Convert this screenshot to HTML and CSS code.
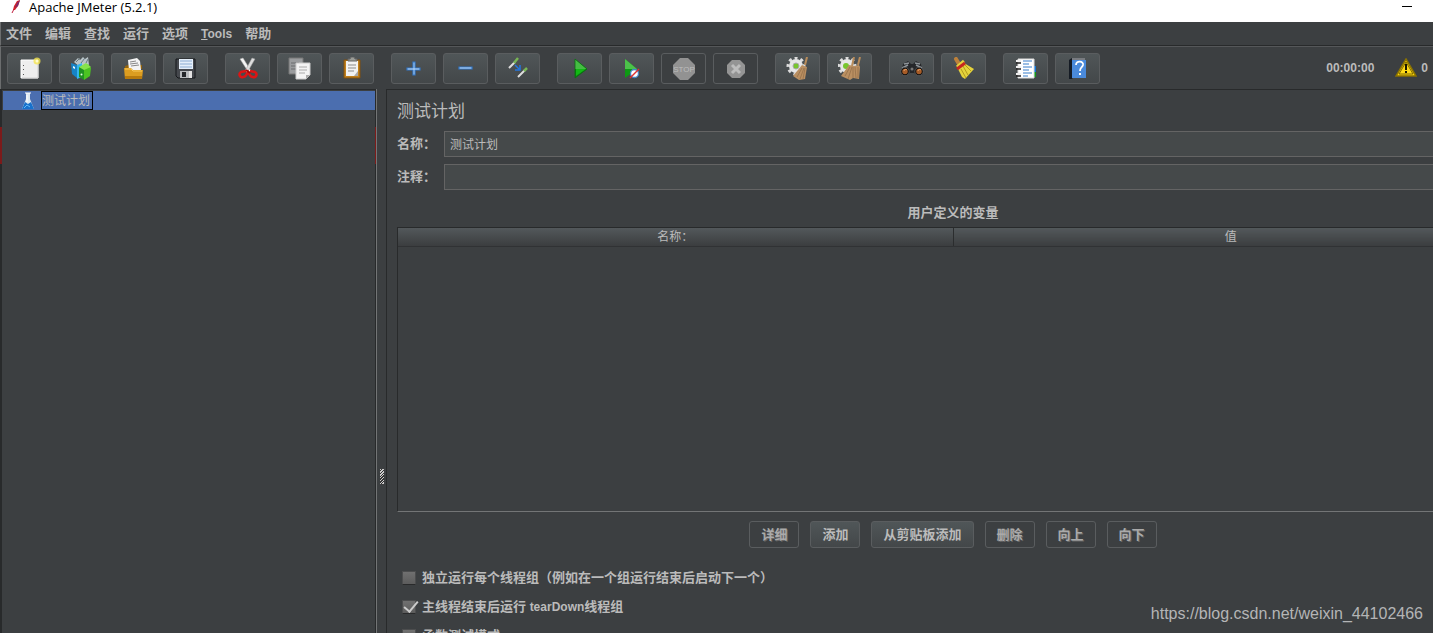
FILE: index.html
```html
<!DOCTYPE html>
<html lang="zh-CN">
<head>
<meta charset="utf-8">
<title>Apache JMeter (5.2.1)</title>
<link rel="stylesheet" href="styles.css">
</head>
<body>
<div class="app">
  <header class="titlebar">
    <svg class="titlebar-icon" width="12" height="16" viewBox="0 0 12 16" aria-hidden="true"><path d="M10 0 7 1 4 6 3 10 5 10 8 6Z" fill="#d22128"/><path d="M10 0 7 3 5 8 8 6Z" fill="#7b2a6c"/><path d="M4 9 2 13" stroke="#c01c3c" stroke-width="1"/></svg>
    <span class="titlebar-text">Apache JMeter (5.2.1)</span>
    <button class="minimize" type="button" aria-label="Minimize"></button>
  </header>

  <nav class="menubar">
    <button type="button">文件</button>
    <button type="button">编辑</button>
    <button type="button">查找</button>
    <button type="button">运行</button>
    <button type="button">选项</button>
    <button class="latin" type="button"><u>T</u>ools</button>
    <button type="button">帮助</button>
  </nav>

  <div class="toolbar">
    <div class="tool-group">
      <button class="tool" type="button" aria-label="新建"><svg viewBox="0 0 24 24"><path d="M3 3h17v18H3z" fill="#eee" stroke="#fff"/><path d="M4 21h16V7" fill="none" stroke="#c8c8c8"/><path d="M5 8h1v1H5zM5 12h1v1H5zM5 17h1v1H5z" fill="#555"/><circle cx="19" cy="4" r="3.500" fill="#f5e550" opacity=".8"/><circle cx="19" cy="4" r="1.500" fill="#fffbd0"/></svg></button>
      <button class="tool" type="button" aria-label="模板"><svg viewBox="0 0 24 24"><path d="m4 5 4-4 2 2 3-3 2 2 3-2 1 8-8 3z" fill="#b9c4c8"/><path d="m6 5 4-4m1 5 4-5m1 5 2-4" stroke="#68777d"/><path d="m1 6 6 2v13l-5-4z" fill="#1683c6"/><path d="m7 8 5-2v14l-5 2z" fill="#35b5ec"/><path d="m3 9 2 1v2l-2-1z" fill="#e8f8ff"/><path d="m9 10 5 2v11l-5-3z" fill="#209323"/><path d="m14 12 4-5 3 4-1 8-6 4z" fill="#4cc322"/><path d="m9 10 7-4 5 4-7 3z" fill="#87e34c"/><circle cx="11.500" cy="17.500" r="1" fill="#e5ffe0"/></svg></button>
      <button class="tool" type="button" aria-label="打开"><svg viewBox="0 0 24 24"><path d="M3 12V9l3-1h14v4z" fill="#94640d"/><path d="m6 3 9-2 3 3 1 9H7z" fill="#f4f4f4"/><path d="m8 5 6-1M8 7l8-1M9 9l8-1" stroke="#888"/><path d="M2 11h7l2 2h10l-1 9H3z" fill="#dc9d20"/><path d="M3 12h6l2 2h9" fill="none" stroke="#f7c95d"/><path d="M3 19h17v3H3z" fill="#b87a0d"/></svg></button>
      <button class="tool" type="button" aria-label="保存"><svg viewBox="0 0 24 24"><path d="M2 2h19v19H4l-2-2z" fill="#45484d" stroke="#15171a"/><path d="M5 2h14v10H5z" fill="#e4eef9"/><path d="M6 4h12M6 7h12M6 10h12" stroke="#8cacd2"/><path d="M6 14h12v7H6z" fill="#b8bbbe"/><path d="M8 15h4v5H8z" fill="#24272b"/><path d="M15 14h3v7h-3z" fill="#e3e3e3"/></svg></button>
    </div>
    <div class="tool-group">
      <button class="tool" type="button" aria-label="剪切"><svg viewBox="0 0 24 24"><path d="m4 2 3-1 8 13-2 2z" fill="#f4f4f4" stroke="#aaa" stroke-width=".5"/><path d="m19 2-3-1-7 13 2 2z" fill="#ddd" stroke="#999" stroke-width=".5"/><path d="m10 14-5 1c-3 2-1 6 2 5 3 0 3-2 5-5 2 3 2 5 5 5 3 1 5-3 2-5l-5-1" fill="none" stroke="#dc1515" stroke-width="2.500"/><path d="m10 13 4 3" stroke="#a80808" stroke-width="2"/></svg></button>
      <button class="tool" type="button" aria-label="复制"><svg viewBox="0 0 24 24"><path d="M1 1h14v16H1z" fill="#9a9c9e" stroke="#777"/><path d="M3 6h8M3 9h6M3 12h5" stroke="#6b6d6e"/><path d="M8 6h14v12l-4 4H8z" fill="#f3f3f3" stroke="#ccc"/><path d="M11 10h8M11 13h8M11 16h6" stroke="#aaa"/><path d="M18 22v-4h4z" fill="#aaa"/></svg></button>
      <button class="tool" type="button" aria-label="粘贴"><svg viewBox="0 0 24 24"><path d="M4 3h16v18H4z" fill="#c1801c" stroke="#805010"/><path d="M6 4h12v15H6z" fill="#f2f2f2"/><path d="M8 4V2h2l1-2h3l1 2h2v2z" fill="#9b9d98" stroke="#666"/><path d="M8 8h8M8 11h8M8 14h6" stroke="#8b8b8b"/><path d="m14 19 4-5v5z" fill="#aaa"/></svg></button>
    </div>
    <div class="tool-group">
      <button class="tool" type="button" aria-label="全部展开"><svg viewBox="0 0 24 24"><path d="M11 5h2v6h5v2h-5v5h-2v-5H5v-2h6z" fill="#c9e2fa" stroke="#3277c8" stroke-width="1.200"/></svg></button>
      <button class="tool" type="button" aria-label="全部折叠"><svg viewBox="0 0 24 24"><path d="M5 10h13v2H5z" fill="#c9e2fa" stroke="#3277c8" stroke-width="1.200"/></svg></button>
      <button class="tool" type="button" aria-label="切换"><svg viewBox="0 0 24 24"><path d="m3 11 6-6M12 20l7-7" stroke="#ddd" stroke-width="2"/><path d="m8 6 4-5M18 14l3-3" stroke="#79b655" stroke-width="2.500"/><path d="m9 8 4 4m1-4v5H9" fill="none" stroke="#2376df" stroke-width="1.500"/></svg></button>
    </div>
    <div class="tool-group">
      <button class="tool" type="button" aria-label="启动"><svg viewBox="0 0 24 24"><path d="m7 2 12 10L7 21z" fill="#087f0b"/><path d="m7 2 12 10H7z" fill="#45bd43"/><path d="m8 12h10L8 19z" fill="#12b814"/><path d="m7 2 12 10L7 21z" fill="none" stroke="#087010" stroke-width=".8"/></svg></button>
      <button class="tool" type="button" aria-label="不停顿开始"><svg viewBox="0 0 24 24"><path d="m5 2 12 10L5 21z" fill="#0e9a13"/><path d="m5 2 12 10H5z" fill="#4cc14a"/><circle cx="14.500" cy="16.500" r="4" fill="#fff" stroke="#4387c8" stroke-width="1.300"/><path d="m10 21 9-9" stroke="#e03232" stroke-width="1.500"/></svg></button>
      <button class="tool" type="button" aria-label="停止" disabled><svg viewBox="0 0 24 24"><path d="M8 1h8l7 7v8l-7 7H8l-7-7V8z" fill="#929292"/><text x="12" y="15" class="stop-text">STOP</text></svg></button>
      <button class="tool" type="button" aria-label="关闭" disabled><svg viewBox="0 0 24 24"><path d="M8 3h8l5 5v8l-5 5H8l-5-5V8z" fill="#949494"/><path d="m8 8 8 8m0-8-8 8" stroke="#bdbdbd" stroke-width="3"/></svg></button>
    </div>
    <div class="tool-group">
      <button class="tool" type="button" aria-label="清除"><svg viewBox="0 0 24 24"><circle cx="10" cy="9" r="8" fill="none" stroke="#ddd" stroke-width="3" stroke-dasharray="3 3"/><circle cx="10" cy="9" r="7" fill="#e7e7e7"/><circle cx="10" cy="9" r="3" fill="#78c62e" stroke="#aaa"/><path d="m19 8 2-8" stroke="#b78b5a" stroke-width="2"/><path d="m16 8 5 2-2 12-6 1-6-4z" fill="#ba8f61"/><path d="m16 11-5 9m7-9-4 11m5-11-2 11" stroke="#94704a" stroke-width=".8"/></svg></button>
      <button class="tool" type="button" aria-label="清除全部"><svg viewBox="0 0 24 24"><circle cx="9" cy="9" r="8" fill="none" stroke="#ddd" stroke-width="3" stroke-dasharray="3 3"/><circle cx="9" cy="9" r="7" fill="#e7e7e7"/><circle cx="8" cy="9" r="3" fill="#78c62e"/><path d="m14 9 2-9m4 8 2-8" stroke="#b78b5a" stroke-width="2"/><path d="m11 8 5 1 5-1 1 2-1 12-6-1-3 2-9-4z" fill="#ba8f61"/><path d="m12 10-5 9m7-9-4 12m5-12v11m2-11 1 11m2-11v11" stroke="#94704a" stroke-width=".8"/></svg></button>
    </div>
    <div class="tool-group">
      <button class="tool" type="button" aria-label="查找"><svg viewBox="0 0 24 24"><path d="M3 7 8 4l3 3h2l3-3 5 3 2 10-4 2-5-3h-4l-5 3-4-2z" fill="#25272a"/><path d="m4 7 5-1m11 1-5-1M2 11l6-3m14 3-6-3" stroke="#8d9398" stroke-width="1.500"/><circle cx="5" cy="14.500" r="3.500" fill="#a75c27" stroke="#111" stroke-width="1.500"/><circle cx="19" cy="14.500" r="3.500" fill="#a75c27" stroke="#111" stroke-width="1.500"/><circle cx="5" cy="14.500" r="4.200" fill="none" stroke="#777" stroke-width=".6"/><circle cx="19" cy="14.500" r="4.200" fill="none" stroke="#777" stroke-width=".6"/><path d="M4 14c0-2 2-2 3-1m11 1c0-2 2-2 3-1" fill="none" stroke="#e8a168"/><circle cx="12" cy="12" r="1.500" fill="#777"/></svg></button>
      <button class="tool" type="button" aria-label="重置搜索"><svg viewBox="0 0 24 24"><path d="m4 2 3 5" stroke="#bd813b" stroke-width="4" stroke-linecap="round"/><path d="m12 6 10 6-9 10-3-2-4-8z" fill="#e5d33c"/><path d="m13 8 6 6m-8-5 5 9M9 12l5 9" stroke="#b39b1c"/><path d="m5 10 7-6" stroke="#e5d33c" stroke-width="3"/><path d="m5 12 8-6" stroke="#c52620" stroke-width="3"/></svg></button>
    </div>
    <div class="tool-group">
      <button class="tool" type="button" aria-label="函数助手"><svg viewBox="0 0 24 24"><path d="M19 9h3v6h-3z" fill="#1475d4"/><path d="M19 15h3v5h-3z" fill="#13991c"/><path d="M4 2h16v19H4z" fill="#fff" stroke="#ddd"/><path d="M2 4h5M2 10h5M2 17h5" stroke="#eee" stroke-width="2"/><path d="M2 6h5M2 12h5M2 19h5" stroke="#222" stroke-width="1.500"/><path d="M9 4h9M9 7h6M9 10h9M9 13h6M9 16h9M9 19h5" stroke="#377dc9"/></svg></button>
      <button class="tool" type="button" aria-label="帮助"><svg viewBox="0 0 24 24"><path d="m3 3 3-2h13v2L6 22H3z" fill="#151b24"/><path d="M6 3h14v18H6z" fill="#4a8adb"/><path d="M6 2h13" stroke="#ddd"/><path d="M10 8c0-5 8-4 7 0-1 3-3 2-3 6" fill="none" stroke="#fff" stroke-width="1.800"/><path d="M13 16h2v2h-2z" fill="#fff"/></svg></button>
    </div>
    <div class="status">
      <span>00:00:00</span>
      <button class="warning" type="button"><svg width="22" height="20" viewBox="0 0 22 20" aria-hidden="true"><path d="M11 1 21 18H1z" fill="#ffd60a" stroke="#8a7200" stroke-width="1.500"/><path d="M11 4 18 16H4z" fill="#ffda16" stroke="#5c4e00" stroke-width=".8"/><path d="M11 6v6M11 13v2" stroke="#191700" stroke-width="2"/></svg>0</button>
    </div>
  </div>

  <main class="workspace">
    <aside class="tree">
      <div class="tree-row">
        <svg width="14" height="18" viewBox="0 0 14 18" aria-hidden="true"><path d="M5 1h4v6l4 10H1L5 7z" fill="#dce8f1"/><path d="m4 10-3 7h12l-3-7-3 2z" fill="#1871cc"/><path d="M4 1h6M6 3v7" stroke="#fff"/><path d="m3 16 3-3 3 2" fill="none" stroke="#65baf7"/></svg>
        <span class="tree-label">测试计划</span>
      </div>
    </aside>
    <div class="splitter"><span class="grip"></span></div>
    <section class="editor">
      <div class="editor-body">
        <h1>测试计划</h1>
        <div class="field"><label for="name">名称：</label><input id="name" type="text" value="测试计划"></div>
        <div class="field"><label for="comment">注释：</label><input id="comment" type="text"></div>
        <h2>用户定义的变量</h2>
        <div class="table-frame">
          <table>
            <thead><tr><th scope="col">名称：</th><th scope="col">值</th></tr></thead>
          </table>
        </div>
        <div class="actions">
          <button type="button" disabled>详细</button>
          <button type="button">添加</button>
          <button type="button">从剪贴板添加</button>
          <button type="button" disabled>删除</button>
          <button type="button" disabled>向上</button>
          <button type="button" disabled>向下</button>
        </div>
        <div class="options">
          <label><input type="checkbox">独立运行每个线程组（例如在一个组运行结束后启动下一个）</label>
          <label><input type="checkbox" checked><span>主线程结束后运行 <span class="latin">tearDown</span>线程组</span></label>
          <label><input type="checkbox">函数测试模式</label>
        </div>
      </div>
    </section>
  </main>
  <a class="watermark" href="https://blog.csdn.net/weixin_44102466">https://blog.csdn.net/weixin_44102466</a>
</div>
</body>
</html>
```

FILE: styles.css
```css
* { box-sizing: border-box; }

body {
  margin: 0;
  background: #3c3f41;
  color: #bbb;
  font: bold 13px/20px "Liberation Sans", "Noto Sans CJK SC", sans-serif;
}

button, input {
  font: inherit;
  color: inherit;
}

.latin { font-size: 12px; }

.app {
  position: relative;
  display: flex;
  flex-direction: column;
  height: 100vh;
  overflow: hidden;
}

.titlebar {
  display: flex;
  flex: none;
  align-items: flex-start;
  height: 22px;
  padding: 0 21px 0 10px;
  background: #fff;
  color: #000;
  font: 13px/14px "Open Sans", sans-serif;
}

.titlebar-icon { margin-right: 7px; }
.titlebar-text { flex: 1; }

.minimize {
  width: 10px;
  height: 7px;
  padding: 0;
  border: 0;
  border-bottom: 1px solid #000;
  background: none;
}

.menubar {
  display: flex;
  flex: none;
  gap: 13px;
  height: 24px;
  padding: 1px 5px 0;
  border-left: 1px solid #6b6d6e;
  border-bottom: 1px solid #282a2b;
}

.menubar button {
  padding: 0;
  border: 0;
  background: none;
  line-height: 20px;
}

.toolbar {
  display: flex;
  flex: none;
  gap: 17px;
  height: 43px;
  padding: 6px 5px 0 6px;
  border-left: 1px solid #6b6d6e;
  border-top: 1px solid #555759;
}

.tool-group {
  display: flex;
  gap: 7px;
}

.tool {
  display: flex;
  align-items: center;
  justify-content: center;
  width: 45px;
  height: 31px;
  padding: 0;
  border: 1px solid #5a5d5f;
  border-radius: 3px;
  background: linear-gradient(#505658, #434749);
}

.tool svg {
  width: 24px;
  height: 24px;
}

.tool:disabled { background: none; }

.stop-text {
  fill: #bdbdbd;
  font: 8px "Liberation Sans", sans-serif;
  text-anchor: middle;
}

.status {
  display: flex;
  align-items: center;
  gap: 21px;
  height: 29px;
  margin-left: auto;
  font-size: 12px;
}

.warning {
  display: flex;
  align-items: center;
  gap: 4px;
  padding: 0;
  border: 0;
  background: none;
}

.workspace {
  display: flex;
  flex: 1;
  min-height: 0;
}

.tree {
  flex: none;
  width: 376px;
  padding: 1px 0 0 1px;
  border: solid #282a2b;
  border-width: 1px 1px 0 2px;
  border-image: linear-gradient(#282a2b 38px, #7c1a1a 38px 75px, #282a2b 75px) 1 1 0 2;
}

.tree-row {
  display: flex;
  align-items: center;
  gap: 6px;
  height: 19px;
  padding-left: 18px;
  background: #4b6eaf;
}

.tree-label {
  height: 19px;
  padding-right: 2px;
  border: 1px solid #000;
  font-size: 12px;
  font-weight: normal;
  line-height: 18px;
}

.splitter {
  display: flex;
  flex: none;
  justify-content: center;
  width: 10px;
  padding-top: 380px;
  border-left: 1px solid #737576;
}

.grip {
  width: 4px;
  height: 15px;
  background: repeating-linear-gradient(135deg, #ccc 0 1px, #333 1px 2px);
}

.editor {
  flex: 1;
  min-width: 0;
  overflow: hidden;
  border: solid #282a2b;
  border-width: 1px 0 0 1px;
}

/* The form is wider than the visible pane and runs on under its right edge. */
.editor-body {
  margin-right: -76px;
  padding: 10px 0 0 10px;
}

h1 {
  margin: 0 0 7px;
  font-size: 17px;
  font-weight: normal;
  line-height: 24px;
}

.field {
  display: flex;
  align-items: center;
  margin-bottom: 7px;
}

.field label { width: 47px; }

.field input {
  flex: 1;
  height: 26px;
  padding: 0 5px 2px;
  border: 1px solid #646464;
  border-radius: 0;
  background: #45494a;
  font-size: 12px;
  font-weight: normal;
}

h2 {
  margin: 13px 0 4px;
  font-size: 13px;
  line-height: 20px;
  text-align: center;
}

.table-frame {
  height: 285px;
  border: 1px solid #282a2b;
  border-bottom-color: #737576;
}

table {
  width: 100%;
  border-collapse: collapse;
  table-layout: fixed;
}

th {
  height: 18px;
  padding: 1px 0 0;
  border-bottom: 1px solid #303234;
  background: linear-gradient(#53585b, #3b3d3f);
  font-size: 12px;
  font-weight: normal;
  line-height: 16px;
}

th + th { border-left: 1px solid #2b2d2e; }

.actions {
  display: flex;
  justify-content: center;
  gap: 11px;
  margin-top: 9px;
}

.actions button {
  height: 27px;
  padding: 0 11px;
  border: 1px solid #5a5d5f;
  border-radius: 3px;
  background: linear-gradient(#505658, #434749);
  line-height: 20px;
}

.actions button:disabled {
  background: none;
  color: #aaa;
  text-shadow: 1px 1px #666;
}

.options {
  display: flex;
  flex-direction: column;
  align-items: flex-start;
  gap: 9px;
  margin-top: 20px;
  padding-left: 5px;
}

.options label {
  display: flex;
  align-items: center;
  gap: 6px;
  white-space: pre;
}

.options input {
  position: relative;
  width: 14px;
  height: 14px;
  margin: 0;
  border: 1px solid #4c4d4e;
  border-bottom-color: #292a2b;
  appearance: none;
  background: linear-gradient(#707070, #5c5c5c);
}

.options input:checked::after {
  content: "";
  position: absolute;
  left: 4px;
  top: -3px;
  width: 6px;
  height: 12px;
  border: solid #ccc;
  border-width: 0 2px 2px 0;
  transform: rotate(40deg);
}

.watermark {
  position: absolute;
  right: 10px;
  bottom: 9px;
  color: #b4b5b6;
  font-size: 16px;
  font-weight: normal;
  text-decoration: none;
}
```
